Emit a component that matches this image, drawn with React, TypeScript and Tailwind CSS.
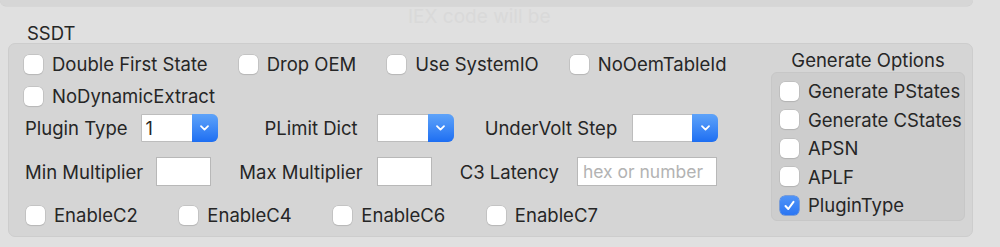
import React from 'react';

const Check: React.FC<{ label: string; checked?: boolean }> = ({ label, checked }) => (
  <label className="flex h-[20px] items-center gap-[9px] whitespace-nowrap">
    {checked ? (
      <span className="flex h-[19px] w-[19px] items-center justify-center rounded-[5px] bg-gradient-to-b from-[#4f93f7] to-[#2b76f3] shadow-[0_0_0_0.5px_#2a6fe0]">
        <svg width="13" height="13" viewBox="0 0 13 13" fill="none">
          <path d="M2.5 7 L5.3 10 L10.5 2.8" stroke="white" strokeWidth="2" strokeLinecap="round" strokeLinejoin="round" />
        </svg>
      </span>
    ) : (
      <span className="h-[19px] w-[19px] rounded-[5px] bg-white shadow-[0_0_0_0.5px_#b4b4b4,0_1px_1px_rgba(0,0,0,0.12)]" />
    )}
    <span>{label}</span>
  </label>
);

const Popup: React.FC<{ value?: string; w: string }> = ({ value, w }) => (
  <div className={`flex h-[28px] ${w} items-stretch rounded-r-[6px] border border-[#bdbdbd] bg-white`}>
    <span className="flex-1 pl-[4px] pt-[3px] text-[18px] leading-[22px]">{value}</span>
    <span className="-my-px -mr-px flex w-[26px] items-center justify-center rounded-r-[6px] bg-gradient-to-b from-[#5ea3f9] to-[#1d6ef2]">
      <svg width="11" height="8" viewBox="0 0 11 8" fill="none">
        <path d="M2 2.2 L5.5 5.6 L9 2.2" stroke="white" strokeWidth="1.8" strokeLinecap="round" strokeLinejoin="round" />
      </svg>
    </span>
  </div>
);

const Field: React.FC<{ w: string; placeholder?: string }> = ({ w, placeholder }) => (
  <div className={`h-[29px] ${w} overflow-hidden whitespace-nowrap border border-[#b8b8b8] bg-white pl-[5px] pt-[2px] text-[17.5px] leading-[24px] text-[#b3b3b3]`}>
    {placeholder}
  </div>
);

export default function App() {
  return (
    <div className="relative h-[247px] w-[1000px] overflow-hidden bg-[#e0e0e0] text-[18.5px] leading-[20px] text-[#262626] [font-family:Inter,'Noto_Sans',sans-serif]">
      <div className="h-[6px] w-[973px] rounded-b-[6px] bg-[#d6d6d6] shadow-[0_0.5px_0_#cdcdcd]" />
      <div className="absolute left-[408px] top-[7px] text-[19px] text-[#d9d9d9]">IEX code will be</div>

      <div className="pl-[27px] pt-[17px] leading-[20px]">SSDT</div>

      <div className="ml-[8px] flex h-[194px] w-[965px] justify-between rounded-[7px] border border-[#cdcdcd] bg-[#d5d5d5]">
        <div className="flex flex-col pl-[15px] pt-[10px]">
          <div className="flex items-center gap-[31px]">
            <Check label="Double First State" />
            <Check label="Drop OEM" />
            <Check label="Use SystemIO" />
            <Check label="NoOemTableId" />
          </div>
          <div className="mt-[12px] flex items-center">
            <Check label="NoDynamicExtract" />
          </div>

          <div className="-ml-[14px] mt-[8px] flex items-center pl-[15px]">
            <span>Plugin Type</span>
            <span className="ml-[13px]"><Popup value="1" w="w-[77px]" /></span>
            <span className="ml-[47px]">PLimit Dict</span>
            <span className="ml-[19px]"><Popup w="w-[77px]" /></span>
            <span className="ml-[31px]">UnderVolt Step</span>
            <span className="ml-[15px]"><Popup w="w-[86px]" /></span>
          </div>

          <div className="-ml-[14px] mt-[15px] flex items-center pl-[15px]">
            <span>Min Multiplier</span>
            <span className="ml-[13px]"><Field w="w-[55px]" /></span>
            <span className="ml-[28px]">Max Multiplier</span>
            <span className="ml-[14px]"><Field w="w-[55px]" /></span>
            <span className="ml-[28px]">C3 Latency</span>
            <span className="ml-[18px]"><Field w="w-[140px]" placeholder="hex or number" /></span>
          </div>

          <div className="mt-[19px] flex items-center gap-[41.5px] pl-[2px]">
            <Check label="EnableC2" />
            <Check label="EnableC4" />
            <Check label="EnableC6" />
            <Check label="EnableC7" />
          </div>
        </div>

        <div className="mr-[7px] flex w-[194px] flex-col items-center pt-[5px]">
          <div className="leading-[22px]">Generate Options</div>
          <div className="mt-[1px] flex h-[149px] w-full flex-col gap-[8.5px] rounded-[6px] border border-[#c7c7c7] bg-[#cdcdcd] pl-[8px] pt-[8px]">
            <Check label="Generate PStates" />
            <Check label="Generate CStates" />
            <Check label="APSN" />
            <Check label="APLF" />
            <Check label="PluginType" checked />
          </div>
        </div>
      </div>
    </div>
  );
}
